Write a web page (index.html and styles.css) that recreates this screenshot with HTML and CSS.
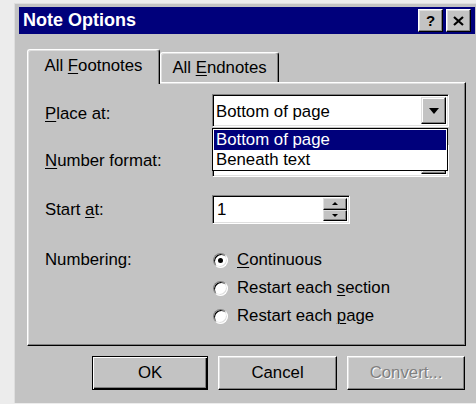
FILE: index.html
```html
<!DOCTYPE html>
<html>
<head>
<meta charset="utf-8">
<link rel="stylesheet" href="styles.css">
</head>
<body>
<div class="dialog">
  <div class="titlebar">
    <span class="title">Note Options</span>
    <div class="cap-buttons">
      <span class="cap-btn help">?</span>
      <span class="cap-btn">
        <svg width="11" height="10" viewBox="0 0 11 10"><path d="M1 1 L10 9 M10 1 L1 9" stroke="#000" stroke-width="2.2"/></svg>
      </span>
    </div>
  </div>
  <div class="content">
    <div class="tabs">
      <div class="tab active"><span>All <u>F</u>ootnotes</span></div>
      <div class="tab"><span>All <u>E</u>ndnotes</span></div>
    </div>
    <div class="panel">
      <div class="field f-place">
        <span class="label shift"><u>P</u>lace at:</span>
        <div class="combo-wrap">
          <div class="combo">
            <span class="combo-text">Bottom of page</span>
            <span class="drop-btn"><svg width="10" height="6" viewBox="0 0 10 6"><path d="M0 0 H10 L5 6 Z" fill="#000"/></svg></span>
          </div>
          <ul class="droplist">
            <li class="sel">Bottom of page</li>
            <li>Beneath text</li>
          </ul>
        </div>
      </div>
      <div class="field f-number">
        <span class="label"><u>N</u>umber format:</span>
        <div class="combo">
          <span class="combo-text"></span>
          <span class="drop-btn"><svg width="10" height="6" viewBox="0 0 10 6"><path d="M0 0 H10 L5 6 Z" fill="#000"/></svg></span>
        </div>
      </div>
      <div class="field f-start">
        <span class="label">Start <u>a</u>t:</span>
        <div class="spin">
          <span class="spin-text">1</span>
          <span class="spin-btns">
            <span class="spin-btn"><svg width="6" height="3" viewBox="0 0 6 3"><path d="M0 3 H6 L3 0 Z" fill="#000"/></svg></span>
            <span class="spin-btn"><svg width="6" height="3" viewBox="0 0 6 3"><path d="M0 0 H6 L3 3 Z" fill="#000"/></svg></span>
          </span>
        </div>
      </div>
      <div class="field f-numbering">
        <span class="label top">Numbering:</span>
        <div class="radios">
          <div class="radio-row"><span class="radio on"></span><span><u>C</u>ontinuous</span></div>
          <div class="radio-row"><span class="radio"></span><span>Restart each <u>s</u>ection</span></div>
          <div class="radio-row"><span class="radio"></span><span>Restart each <u>p</u>age</span></div>
        </div>
      </div>
    </div>
    <div class="buttons">
      <span class="btn default ok">OK</span>
      <span class="btn cancel">Cancel</span>
      <span class="btn convert disabled">Convert...</span>
    </div>
  </div>
</div>
</body>
</html>
```

FILE: styles.css
```css
body {
  margin: 0;
  background: #ececec;
  font-family: "Liberation Sans", Arial, sans-serif;
  font-size: 16.8px;
  color: #000;
}

.dialog {
  box-sizing: border-box;
  width: 462px;
  height: 400px;
  margin: 3px 0 0 14px;
  background: #c3c3c3;
  border-top: 1px solid #dedede;
  border-left: 1px solid #dedede;
  padding: 3px 1px 0 4px;
}

/* caption */
.titlebar {
  height: 27px;
  background: #00007b;
  display: flex;
  align-items: center;
  justify-content: space-between;
  padding: 0 4px 0 4px;
}
.title {
  color: #fff;
  font-weight: bold;
  font-size: 18px;
}
.cap-buttons {
  display: flex;
  gap: 3px;
}
.cap-btn {
  box-sizing: border-box;
  width: 25px;
  height: 23px;
  background: #c3c3c3;
  border: 1px solid;
  border-color: #fff #000 #000 #fff;
  box-shadow: inset -1px -1px #808080, inset 1px 1px #dfdfdf;
  display: flex;
  align-items: center;
  justify-content: center;
}
.cap-btn.help {
  font-weight: bold;
  font-size: 15px;
  line-height: 1;
}

.content {
  padding: 15px 9px 0 8px;
}

/* tabs */
.tabs {
  display: flex;
  align-items: flex-end;
  height: 33px;
}
.tab {
  box-sizing: border-box;
  width: 119px;
  height: 30px;
  border: 1px solid;
  border-color: #fff #000 transparent #fff;
  border-bottom: none;
  border-radius: 3px 3px 0 0;
  box-shadow: inset -1px 0 #808080, inset 1px 1px #dfdfdf;
  display: flex;
  align-items: center;
  justify-content: center;
  white-space: nowrap;
}
.tab.active {
  width: 133px;
  height: 35px;
  margin-bottom: -2px;
  position: relative;
  z-index: 1;
  background: #c3c3c3;
  padding-bottom: 2px;
}

.panel {
  box-sizing: border-box;
  height: 264px;
  border: 1px solid;
  border-color: #fff #000 #000 #fff;
  box-shadow: inset -1px -1px #808080, inset 1px 1px #dfdfdf;
  padding: 11px 0 0 17px;
}

.field {
  display: grid;
  grid-template-columns: 167px auto;
  align-items: center;
}
.label.shift { padding-top: 6px; }
.f-number { margin-top: 17px; }
.f-start { margin-top: 18px; }
.f-numbering { margin-top: 22px; align-items: start; }
.label.top { line-height: 28px; }

/* sunken edit fields */
.combo, .spin {
  box-sizing: border-box;
  height: 33px;
  width: 237px;
  background: #fff;
  border: 1px solid;
  border-color: #808080 #fff #fff #808080;
  box-shadow: inset 1px 1px #000, inset -1px -1px #dfdfdf;
  display: flex;
  align-items: center;
  padding: 2px;
}
.combo-text {
  flex: 1;
  padding: 3px 0 0 1px;
  white-space: nowrap;
}
.drop-btn {
  box-sizing: border-box;
  width: 25px;
  align-self: stretch;
  background: #c3c3c3;
  border: 1px solid;
  border-color: #dfdfdf #000 #000 #dfdfdf;
  box-shadow: inset -1px -1px #808080, inset 1px 1px #fff;
  display: flex;
  align-items: center;
  justify-content: center;
}

.combo-wrap {
  position: relative;
}
.droplist {
  position: absolute;
  z-index: 5;
  top: 34px;
  left: 0;
  box-sizing: border-box;
  width: 236px;
  height: 43px;
  margin: 0;
  padding: 1px;
  list-style: none;
  background: #fff;
  border: 1px solid #000;
}
.droplist li {
  height: 20px;
  line-height: 20px;
  padding-left: 2px;
}
.droplist li.sel {
  background: #00007b;
  color: #fff;
}

.spin {
  width: 138px;
  height: 29px;
}
.spin-text {
  flex: 1;
  padding-left: 2px;
}
.spin-btns {
  width: 24px;
  align-self: stretch;
  display: flex;
  flex-direction: column;
}
.spin-btn {
  flex: 1;
  box-sizing: border-box;
  background: #c3c3c3;
  border: 1px solid;
  border-color: #dfdfdf #000 #000 #dfdfdf;
  box-shadow: inset -1px -1px #808080;
  display: flex;
  align-items: center;
  justify-content: center;
}

/* option buttons */
.radio-row {
  height: 28px;
  display: flex;
  align-items: center;
  gap: 9px;
  white-space: nowrap;
}
.radio {
  box-sizing: border-box;
  position: relative;
  width: 15px;
  height: 15px;
  margin-left: 1px;
  border-radius: 50%;
  background: #fff;
  border: 1px solid;
  border-color: #808080 #fff #fff #808080;
  box-shadow: inset 1px 1px #000, inset -1px -1px #dfdfdf;
}
.radio.on::after {
  content: "";
  position: absolute;
  left: 4px;
  top: 4px;
  width: 5px;
  height: 5px;
  border-radius: 50%;
  background: #000;
}

/* command buttons */
.buttons {
  display: flex;
  justify-content: flex-end;
  gap: 10px;
  margin-top: 10px;
  padding-right: 1px;
}
.btn {
  box-sizing: border-box;
  height: 34px;
  border: 1px solid;
  border-color: #fff #000 #000 #fff;
  box-shadow: inset -1px -1px #808080, inset 1px 1px #dfdfdf;
  display: flex;
  align-items: center;
  justify-content: center;
}
.btn.default {
  border-color: #000;
  box-shadow: inset 1px 1px #fff, inset -1px -1px #000, inset -2px -2px #808080;
}
.ok { width: 116px; }
.cancel { width: 119px; }
.convert { width: 118px; }
.btn.disabled {
  color: #808080;
  text-shadow: 1px 1px #fff;
}

u {
  text-decoration-thickness: 1px;
  text-underline-offset: 2px;
}
```
